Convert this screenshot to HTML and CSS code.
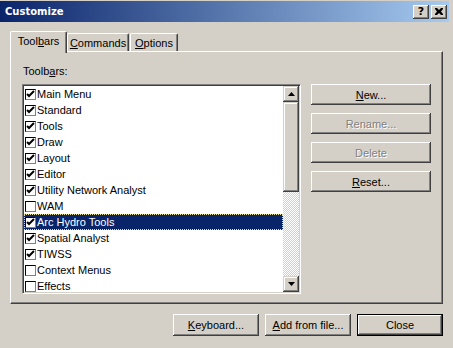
FILE: index.html
```html
<!DOCTYPE html>
<html>
  <head>
    <meta charset="utf-8" />
    <title>Customize</title>
    <link rel="stylesheet" href="styles.css">
  </head>
  <body>
    <div class="window">
      <div class="titlebar">
        <span class="titlebar__text">Customize</span>
        <div class="titlebar__buttons">
          <div class="titlebar__btn titlebar__btn--help">?</div>
          <div class="titlebar__btn">
            <svg width="8" height="7" viewBox="0 0 8 7">
              <path d="M0 0h2l2 2 2-2h2v1l-2 2.5 2 2.5v1h-2l-2-2-2 2h-2v-1l2-2.5-2-2.5z" fill="#000" />
            </svg>
          </div>
        </div>
      </div>

      <div class="tabs">
        <div class="tab tab--active tab--toolbars">Tool<u>b</u>ars</div>
        <div class="tab tab--commands"><u>C</u>ommands</div>
        <div class="tab tab--options"><u>O</u>ptions</div>
      </div>

      <div class="panel">
        <div class="panel__label">Toolb<u>a</u>rs:</div>
        <div class="panel__body">
          <div class="listbox">
            <ul class="listbox__items">
              <li class="item"><span class="check check--on"></span>Main Menu</li>
              <li class="item"><span class="check check--on"></span>Standard</li>
              <li class="item"><span class="check check--on"></span>Tools</li>
              <li class="item"><span class="check check--on"></span>Draw</li>
              <li class="item"><span class="check check--on"></span>Layout</li>
              <li class="item"><span class="check check--on"></span>Editor</li>
              <li class="item"><span class="check check--on"></span>Utility Network Analyst</li>
              <li class="item"><span class="check"></span>WAM</li>
              <li class="item item--selected"><span class="check check--on"></span><span class="item__text">Arc Hydro Tools</span></li>
              <li class="item"><span class="check check--on"></span>Spatial Analyst</li>
              <li class="item"><span class="check check--on"></span>TIWSS</li>
              <li class="item"><span class="check"></span>Context Menus</li>
              <li class="item"><span class="check"></span>Effects</li>
            </ul>
            <div class="scrollbar">
              <div class="scrollbar__btn">
                <svg width="7" height="4" viewBox="0 0 7 4"><path d="M3.5 0L7 4H0z" fill="#000" /></svg>
              </div>
              <div class="scrollbar__thumb"></div>
              <div class="scrollbar__track"></div>
              <div class="scrollbar__btn">
                <svg width="7" height="4" viewBox="0 0 7 4"><path d="M0 0h7L3.5 4z" fill="#000" /></svg>
              </div>
            </div>
          </div>

          <div class="actions">
            <button class="btn"><u>N</u>ew...</button>
            <button class="btn btn--disabled">Rename...</button>
            <button class="btn btn--disabled">Delete</button>
            <button class="btn"><u>R</u>eset...</button>
          </div>
        </div>
      </div>

      <div class="footer">
        <button class="btn btn--wide"><u>K</u>eyboard...</button>
        <button class="btn btn--wide"><u>A</u>dd from file...</button>
        <button class="btn btn--wide btn--default">Close</button>
      </div>
    </div>
  </body>
</html>
```

FILE: styles.css
```css
body {
  --face: #d4d0c8;
  --shadow: #808080;
  --dark: #404040;
  --highlight: #0a246a;

  margin: 0;
  background: var(--face);
  font: 11px "Liberation Sans", Arial, sans-serif;
  color: #000;
}

.window {
  width: 453px;
  height: 348px;
  box-sizing: border-box;
  padding: 1px 4px 0 0;
  overflow: hidden;
}

/* title bar */

.titlebar {
  height: 21px;
  display: flex;
  align-items: center;
  justify-content: space-between;
  padding: 0 2px 0 5px;
  background: linear-gradient(to right, #0a246a, #a6caf0);
}

.titlebar__text {
  font: bold 10px "DejaVu Sans", sans-serif;
  color: #fff;
}

.titlebar__buttons {
  display: flex;
  gap: 2px;
}

.titlebar__btn {
  width: 16px;
  height: 14px;
  display: flex;
  align-items: center;
  justify-content: center;
  background: var(--face);
  box-shadow: inset -1px -1px var(--dark), inset 1px 1px #fff,
    inset -2px -2px var(--shadow), inset 2px 2px var(--face);
}

.titlebar__btn--help {
  font: bold 11px "DejaVu Sans", sans-serif;
  line-height: 14px;
}

/* tabs */

.tabs {
  display: flex;
  align-items: flex-end;
  height: 20px;
  margin-top: 9px;
  padding-left: 10px;
}

.tab {
  height: 18px;
  line-height: 18px;
  box-sizing: border-box;
  text-align: center;
  white-space: nowrap;
  border-top: 1px solid #fff;
  border-left: 1px solid #fff;
  border-right: 1px solid var(--dark);
  border-radius: 2px 2px 0 0;
  box-shadow: inset -1px 0 var(--shadow);
}

.tab--toolbars {
  width: 57px;
}

.tab--commands {
  width: 62px;
}

.tab--options {
  width: 48px;
  margin-left: 1px;
}

.tab--active {
  position: relative;
  z-index: 1;
  height: 22px;
  line-height: 19px;
  margin-bottom: -2px;
  background: var(--face);
}

/* panel */

.panel {
  height: 253px;
  margin: 0 6px 0 10px;
  box-sizing: border-box;
  border-top: 1px solid #fff;
  border-left: 1px solid #fff;
  border-right: 1px solid var(--dark);
  border-bottom: 1px solid var(--dark);
  box-shadow: inset -1px -1px var(--shadow);
  padding: 12px 0 0 11px;
}

.panel__label {
  line-height: 14px;
  padding-left: 1px;
}

.panel__body {
  display: flex;
  gap: 10px;
  margin-top: 6px;
}

/* list box */

.listbox {
  width: 279px;
  height: 210px;
  box-sizing: border-box;
  display: flex;
  background: #fff;
  border-top: 1px solid var(--shadow);
  border-left: 1px solid var(--shadow);
  border-right: 1px solid #fff;
  border-bottom: 1px solid #fff;
  box-shadow: inset 1px 1px var(--dark), inset -1px -1px var(--face);
  padding: 1px;
}

.listbox__items {
  flex: 1;
  margin: 0;
  padding: 0;
  list-style: none;
  overflow: hidden;
}

.item {
  height: 16px;
  line-height: 16px;
  display: flex;
  align-items: center;
  white-space: nowrap;
}

.item--selected {
  background: var(--highlight);
  color: #fff;
  outline: 1px dotted #e8e0a0;
  outline-offset: -1px;
}

.check {
  width: 11px;
  height: 11px;
  margin: 1px 1px 0 1px;
  box-sizing: border-box;
  flex-shrink: 0;
  background: #fff;
  border-top: 1px solid #000;
  border-left: 1px solid #000;
  border-right: 1px solid var(--shadow);
  border-bottom: 1px solid var(--shadow);
}

.check--on {
  background: #fff url("data:image/svg+xml,%3Csvg xmlns='http://www.w3.org/2000/svg' width='9' height='9' viewBox='0 0 9 9'%3E%3Cpath d='M1 4l2 2 5-5' stroke='%23000' stroke-width='2' fill='none'/%3E%3C/svg%3E") no-repeat 0 0;
}

/* scrollbar */

.scrollbar {
  width: 16px;
  display: flex;
  flex-direction: column;
}

.scrollbar__btn,
.scrollbar__thumb {
  background: var(--face);
  box-shadow: inset -1px -1px var(--dark), inset 1px 1px var(--face),
    inset -2px -2px var(--shadow), inset 2px 2px #fff;
}

.scrollbar__btn {
  height: 16px;
  display: flex;
  align-items: center;
  justify-content: center;
}

.scrollbar__thumb {
  height: 90px;
}

.scrollbar__track {
  flex: 1;
  background: repeating-conic-gradient(#fff 0 25%, var(--face) 0 50%) 0 0 / 2px 2px;
}

/* buttons */

.actions {
  display: flex;
  flex-direction: column;
  gap: 8px;
}

.btn {
  width: 120px;
  height: 21px;
  padding: 0;
  border: none;
  background: var(--face);
  font: 11px "Liberation Sans", Arial, sans-serif;
  color: #000;
  box-shadow: inset -1px -1px var(--dark), inset 1px 1px #fff,
    inset -2px -2px var(--shadow), inset 2px 2px var(--face);
}

.btn--disabled {
  color: var(--shadow);
  text-shadow: 1px 1px #fff;
}

.btn--wide {
  width: 86px;
  height: 22px;
}

.btn--default {
  border: 1px solid #000;
}

.footer {
  display: flex;
  justify-content: flex-end;
  gap: 6px;
  margin-top: 10px;
  padding-right: 6px;
}
```
